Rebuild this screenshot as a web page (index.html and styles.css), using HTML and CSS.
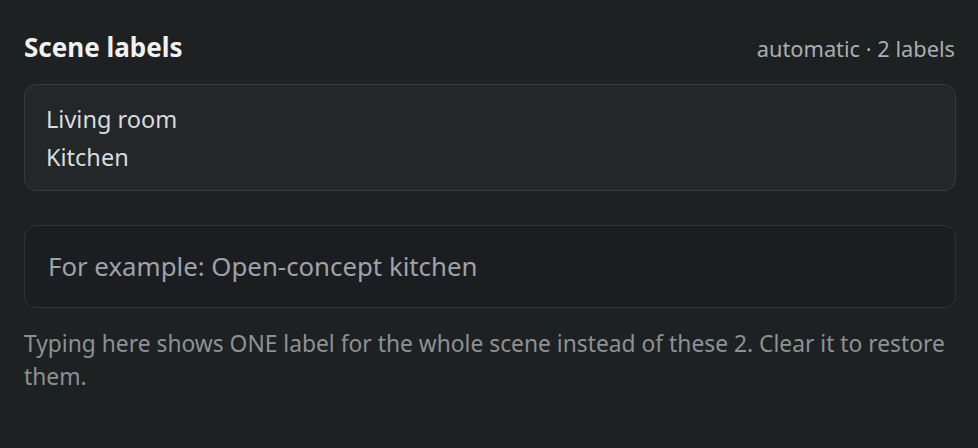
FILE: index.html
```html
<!DOCTYPE html>
<html lang="en">
<head>
<meta charset="utf-8">
<title>Scene labels</title>
<link rel="stylesheet" href="styles.css">
</head>
<body>
<section class="panel">
  <header class="panel-header">
    <h2 class="panel-title">Scene labels</h2>
    <span class="panel-meta">automatic · 2 labels</span>
  </header>
  <ul class="label-list">
    <li class="label-item">Living room</li>
    <li class="label-item">Kitchen</li>
  </ul>
  <input class="override-input" type="text" placeholder="For example: Open-concept kitchen">
  <p class="help-text">Typing here shows ONE label for the whole scene instead of these 2. Clear it to restore them.</p>
</section>
</body>
</html>
```

FILE: styles.css
```css
html, body {
  margin: 0;
  padding: 0;
  background: #1e2122;
}

body {
  font-family: "Noto Sans", "Open Sans", sans-serif;
  color: #d8dcdd;
}

.panel {
  padding: 0 22px 0 24px;
}

.panel-header {
  display: flex;
  justify-content: space-between;
  align-items: baseline;
  padding-top: 29px;
  height: 36px;
  margin-bottom: 19px;
}

.panel-title {
  margin: 0;
  font-size: 26px;
  font-weight: 700;
  line-height: 36px;
  color: #f0f2f2;
}

.panel-meta {
  margin-right: 1px;
  font-size: 21.8px;
  line-height: 36px;
  color: #a9aeb0;
}

.label-list {
  list-style: none;
  margin: 0;
  padding: 15px 21px 14px;
  background: #232728;
  border: 1px solid #363b3d;
  border-radius: 12px;
}

.label-item {
  font-size: 23.5px;
  line-height: 38px;
  color: #d8dcdd;
}

.override-input {
  display: block;
  box-sizing: border-box;
  width: 100%;
  height: 83px;
  margin: 34px 0 0;
  padding: 0 23px 2px;
  background: #1b1d21;
  border: 1px solid #2f3337;
  border-radius: 12px;
  font-family: inherit;
  font-size: 25.8px;
  color: #d8dcdd;
  outline: none;
}

.override-input::placeholder {
  color: #9ea3a6;
  opacity: 1;
}

.help-text {
  margin: 19px 0 0;
  font-size: 22.8px;
  line-height: 33px;
  color: #8c9294;
}
```
